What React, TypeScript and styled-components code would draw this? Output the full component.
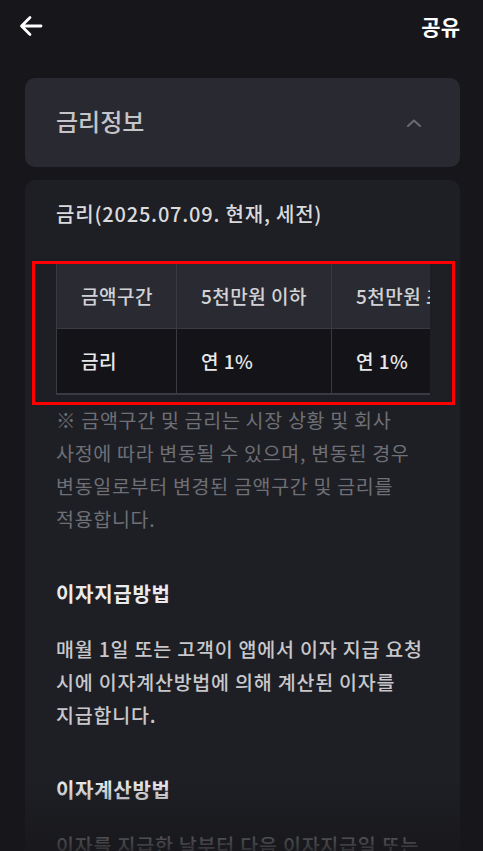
import React from 'react';
import styled, { createGlobalStyle } from 'styled-components';

const GlobalStyle = createGlobalStyle`
  html, body {
    margin: 0;
    padding: 0;
    background: #17171b;
  }
  body {
    font-family: "Noto Sans CJK KR", "Noto Sans", sans-serif;
    -webkit-font-smoothing: antialiased;
  }
`;

const Screen = styled.div`
  width: 483px;
  height: 851px;
  overflow: hidden;
  position: relative;
  background: #17171b;
`;

const TopBar = styled.header`
  height: 52px;
  display: flex;
  align-items: center;
  justify-content: space-between;
  padding: 0 23px 0 17px;
`;

const BackButton = styled.button`
  background: none;
  border: none;
  padding: 0;
  width: 28px;
  height: 28px;
  display: flex;
  align-items: center;
  justify-content: center;
  color: #ffffff;
`;

const ShareText = styled.span`
  color: #ffffff;
  font-size: 21px;
  font-weight: 700;
`;

const Body = styled.main`
  padding: 26px 23px 0 25px;
  display: flex;
  flex-direction: column;
  gap: 13px;
`;

const AccordionHead = styled.div`
  height: 89px;
  border-radius: 10px;
  background: #292a31;
  display: flex;
  align-items: center;
  justify-content: space-between;
  padding: 0 38px 0 31px;
`;

const AccordionTitle = styled.span`
  color: #c4c4c9;
  font-size: 24px;
  font-weight: 500;
  line-height: 30px;
  margin-top: -3px;
`;

const Panel = styled.section`
  position: relative;
  background: #1e1f24;
  border-radius: 10px 10px 0 0;
  padding: 20px 30px 0 31px;
  min-height: 700px;
`;

const PanelTitle = styled.h3`
  margin: 0;
  color: #dadadd;
  font-size: 20px;
  font-weight: 500;
  line-height: 28px;
  letter-spacing: 0.8px;
  white-space: nowrap;
`;

const TableWrap = styled.div`
  margin-top: 35px;
  width: 374px;
  overflow: hidden;
  border-bottom: 1px solid #3a3b42;
`;

const RateTable = styled.table`
  border-collapse: collapse;
  table-layout: fixed;
  width: 480px;
`;

const Cell = styled.td<{ $head?: boolean }>`
  height: 65px;
  padding: 0 0 0 24px;
  box-sizing: border-box;
  border: 1px solid #3a3b42;
  border-top: none;
  background: ${(p) => (p.$head ? '#2a2b32' : '#141418')};
  color: ${(p) => (p.$head ? '#d2d2d6' : '#e8e8ea')};
  font-size: 19px;
  font-weight: 500;
  white-space: nowrap;
  letter-spacing: 0.5px;
`;

const Highlight = styled.div`
  position: absolute;
  left: 7px;
  top: 81px;
  width: 423px;
  height: 144px;
  box-sizing: border-box;
  border: 3px solid #ff0000;
  pointer-events: none;
`;

const Note = styled.p`
  margin: 8px 0 0;
  color: #6f6f76;
  font-size: 19.5px;
  line-height: 33px;
  letter-spacing: 0.7px;
  white-space: nowrap;
`;

const SectionHeading = styled.h4`
  margin: 42px 0 0;
  color: #ebebee;
  font-size: 20px;
  font-weight: 700;
  line-height: 33px;
  letter-spacing: 0.7px;
`;

const Paragraph = styled.p`
  margin: 22px 0 0;
  color: #c8c8cc;
  font-size: 19.5px;
  font-weight: 500;
  line-height: 33px;
  letter-spacing: 0.8px;
  white-space: nowrap;
`;

const BottomFade = styled.div`
  position: absolute;
  left: 0;
  right: 0;
  bottom: 0;
  height: 70px;
  background: linear-gradient(to bottom, rgba(23, 23, 27, 0), rgba(23, 23, 27, 0.85));
  pointer-events: none;
`;

const columns = ['5천만원 이하', '5천만원 초과'];

export default function App() {
  return (
    <Screen>
      <GlobalStyle />
      <TopBar>
        <BackButton aria-label="back">
          <svg width="28" height="28" viewBox="0 0 28 28" fill="none">
            <path
              d="M24 14H5M13 5.5L4.5 14L13 22.5"
              stroke="currentColor"
              strokeWidth="2.8"
              strokeLinecap="round"
              strokeLinejoin="round"
            />
          </svg>
        </BackButton>
        <ShareText>공유</ShareText>
      </TopBar>
      <Body>
        <AccordionHead>
          <AccordionTitle>금리정보</AccordionTitle>
          <svg width="16" height="10" viewBox="0 0 16 10" fill="none">
            <path d="M2 8L8 2.5L14 8" stroke="#6b6b73" strokeWidth="2" strokeLinecap="round" strokeLinejoin="round" />
          </svg>
        </AccordionHead>
        <Panel>
          <PanelTitle>금리(2025.07.09. 현재, 세전)</PanelTitle>
          <TableWrap>
            <RateTable>
              <colgroup>
                <col style={{ width: 120 }} />
                <col style={{ width: 155 }} />
                <col style={{ width: 205 }} />
              </colgroup>
              <tbody>
                <tr>
                  <Cell $head style={{ borderLeft: '1px solid #3a3b42' }}>금액구간</Cell>
                  {columns.map((c) => (
                    <Cell $head key={c}>{c}</Cell>
                  ))}
                </tr>
                <tr>
                  <Cell>금리</Cell>
                  <Cell>연 1%</Cell>
                  <Cell>연 1%</Cell>
                </tr>
              </tbody>
            </RateTable>
          </TableWrap>
          <Note>
            ※ 금액구간 및 금리는 시장 상황 및 회사
            <br />
            사정에 따라 변동될 수 있으며, 변동된 경우
            <br />
            변동일로부터 변경된 금액구간 및 금리를
            <br />
            적용합니다.
          </Note>
          <SectionHeading>이자지급방법</SectionHeading>
          <Paragraph>
            매월 1일 또는 고객이 앱에서 이자 지급 요청
            <br />
            시에 이자계산방법에 의해 계산된 이자를
            <br />
            지급합니다.
          </Paragraph>
          <SectionHeading>이자계산방법</SectionHeading>
          <Paragraph>이자를 지급한 날부터 다음 이자지급일 또는</Paragraph>
          <Highlight />
        </Panel>
      </Body>
      <BottomFade />
    </Screen>
  );
}
